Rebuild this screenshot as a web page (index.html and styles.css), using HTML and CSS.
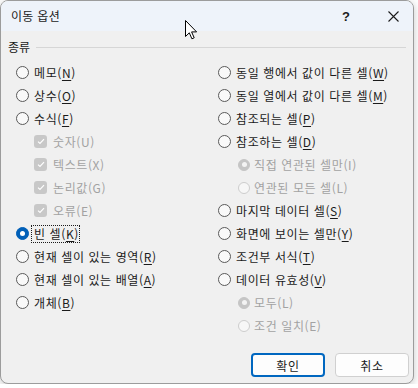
FILE: index.html
```html
<!DOCTYPE html>
<html lang="ko">
<head>
    <meta charset="UTF-8">
    <title>이동 옵션</title>
    <link rel="stylesheet" href="styles.css">
</head>
<body>
    <div class="dialog">
        <div class="titlebar">
            <span class="title">이동 옵션</span>
            <span class="help">?</span>
            <span class="close">
                <svg width="11" height="11" viewBox="0 0 11 11"><path d="M0.5 0.5 L10.5 10.5 M10.5 0.5 L0.5 10.5" stroke="#1b1b1b" stroke-width="1.1" fill="none"/></svg>
            </span>
        </div>

        <div class="content">
            <div class="group-label">
                <span>종류</span>
                <span class="rule"></span>
            </div>

            <div class="columns">
                <!-- left column -->
                <div class="col">
                    <div class="opt"><span class="radio"></span><span>메모(<u>N</u>)</span></div>
                    <div class="opt"><span class="radio"></span><span>상수(<u>O</u>)</span></div>
                    <div class="opt"><span class="radio"></span><span>수식(<u>F</u>)</span></div>
                    <div class="opt sub-check disabled"><span class="check"><svg width="8" height="7" viewBox="0 0 8 7"><path d="M1 3.6 L3 5.5 L7 1.2" stroke="#fff" stroke-width="1.2" fill="none"/></svg></span><span>숫자(U)</span></div>
                    <div class="opt sub-check disabled"><span class="check"><svg width="8" height="7" viewBox="0 0 8 7"><path d="M1 3.6 L3 5.5 L7 1.2" stroke="#fff" stroke-width="1.2" fill="none"/></svg></span><span>텍스트(X)</span></div>
                    <div class="opt sub-check disabled"><span class="check"><svg width="8" height="7" viewBox="0 0 8 7"><path d="M1 3.6 L3 5.5 L7 1.2" stroke="#fff" stroke-width="1.2" fill="none"/></svg></span><span>논리값(G)</span></div>
                    <div class="opt sub-check disabled"><span class="check"><svg width="8" height="7" viewBox="0 0 8 7"><path d="M1 3.6 L3 5.5 L7 1.2" stroke="#fff" stroke-width="1.2" fill="none"/></svg></span><span>오류(E)</span></div>
                    <div class="opt"><span class="radio on"></span><span class="focus">빈 셀(<u>K</u>)</span></div>
                    <div class="opt"><span class="radio"></span><span>현재 셀이 있는 영역(<u>R</u>)</span></div>
                    <div class="opt"><span class="radio"></span><span>현재 셀이 있는 배열(<u>A</u>)</span></div>
                    <div class="opt"><span class="radio"></span><span>개체(<u>B</u>)</span></div>
                </div>

                <!-- right column -->
                <div class="col">
                    <div class="opt"><span class="radio"></span><span>동일 행에서 값이 다른 셀(<u>W</u>)</span></div>
                    <div class="opt"><span class="radio"></span><span>동일 열에서 값이 다른 셀(<u>M</u>)</span></div>
                    <div class="opt"><span class="radio"></span><span>참조되는 셀(<u>P</u>)</span></div>
                    <div class="opt"><span class="radio"></span><span>참조하는 셀(<u>D</u>)</span></div>
                    <div class="opt sub-radio disabled"><span class="radio small dim-on"></span><span>직접 연관된 셀만(I)</span></div>
                    <div class="opt sub-radio disabled"><span class="radio small dim"></span><span>연관된 모든 셀(L)</span></div>
                    <div class="opt"><span class="radio"></span><span>마지막 데이터 셀(<u>S</u>)</span></div>
                    <div class="opt"><span class="radio"></span><span>화면에 보이는 셀만(<u>Y</u>)</span></div>
                    <div class="opt"><span class="radio"></span><span>조건부 서식(<u>T</u>)</span></div>
                    <div class="opt"><span class="radio"></span><span>데이터 유효성(<u>V</u>)</span></div>
                    <div class="opt sub-radio disabled"><span class="radio small dim-on"></span><span>모두(L)</span></div>
                    <div class="opt sub-radio disabled"><span class="radio small dim"></span><span>조건 일치(E)</span></div>
                </div>
            </div>

            <div class="buttons">
                <button class="btn primary">확인</button>
                <button class="btn">취소</button>
            </div>
        </div>

        <svg class="cursor" width="13" height="20" viewBox="0 0 13 20">
            <path d="M0.5 0.5 L0.5 16.5 L4.3 12.8 L6.9 18.8 L9.2 17.8 L6.6 11.9 L11.6 11.9 Z" fill="#fff" stroke="#000" stroke-width="1" stroke-linejoin="round"/>
        </svg>
    </div>
</body>
</html>
```

FILE: styles.css
```css
body {
    margin: 0;
    background: #ffffff;
    font-family: "Noto Sans CJK KR", "Noto Sans", sans-serif;
    font-size: 12px;
    color: #1b1b1b;
}
.dialog {
    position: relative;
    width: 414px;
    height: 384px;
    box-sizing: border-box;
    border: 1px solid #9c9c9c;
    border-radius: 8px;
    background: #f0f0f0;
    box-shadow: 0 2px 8px rgba(0,0,0,0.22);
    overflow: hidden;
}
.titlebar {
    display: flex;
    align-items: center;
    height: 30px;
    padding-left: 10px;
    background: #eef3fa;
}
.title {
    flex: 1;
    font-size: 12px;
    line-height: 16px;
    letter-spacing: 0.3px;
}
.help {
    width: 14px;
    margin-right: 35px;
    font-family: "Liberation Sans", sans-serif;
    font-size: 13px;
    font-weight: bold;
    text-align: center;
}
.close {
    display: flex;
    margin-right: 14px;
}
.content {
    padding: 8px 4px 0 7px;
}
.group-label {
    display: flex;
    align-items: center;
    gap: 6px;
    height: 16px;
    line-height: 16px;
}
.rule {
    flex: 1;
    height: 1px;
    margin-right: 3px;
    background: #d6d6d6;
}
.columns {
    display: grid;
    grid-template-columns: 202px 1fr;
    margin-top: 6px;
    padding-left: 8px;
}
.opt {
    display: flex;
    align-items: center;
    gap: 5px;
    height: 23px;
    line-height: 16px;
    letter-spacing: 0.6px;
    white-space: nowrap;
}
.opt u {
    text-underline-offset: 2px;
}
.disabled {
    color: #a2a2a2;
}
.sub-check {
    padding-left: 18px;
    gap: 6px;
}
.sub-radio {
    padding-left: 20px;
    gap: 4px;
}
.radio {
    position: relative;
    flex: none;
    width: 13px;
    height: 13px;
    box-sizing: border-box;
    border: 1px solid #5a5a5a;
    border-radius: 50%;
    background: #f9f9f9;
}
.radio.small {
    width: 12px;
    height: 12px;
}
.radio.on {
    border-color: #005fb8;
    background: #005fb8;
}
.radio.on::after,
.radio.dim-on::after {
    content: "";
    position: absolute;
    left: 50%;
    top: 50%;
    width: 5px;
    height: 5px;
    margin: -2.5px 0 0 -2.5px;
    border-radius: 50%;
    background: #ffffff;
}
.radio.dim {
    border-color: #cdcdcd;
    background: #f7f7f7;
}
.radio.dim-on {
    border-color: #c5c5c5;
    background: #c5c5c5;
}
.radio.dim-on::after {
    background: #f3f3f3;
}
.check {
    display: flex;
    align-items: center;
    justify-content: center;
    flex: none;
    width: 13px;
    height: 13px;
    border-radius: 3px;
    background: #c8c8c8;
}
.focus {
    margin-left: -3px;
    margin-right: -2px;
    padding: 0 0 0 2px;
    border: 1px dotted #1b1b1b;
    line-height: 16px;
}
.buttons {
    display: flex;
    justify-content: flex-end;
    gap: 10px;
    margin-top: 16px;
}
.btn {
    width: 74px;
    height: 24px;
    box-sizing: border-box;
    border: 1px solid #d0d0d0;
    border-radius: 4px;
    background: #fdfdfd;
    font-family: "Noto Sans CJK KR", sans-serif;
    font-size: 12px;
    letter-spacing: 0.6px;
    color: #1b1b1b;
    padding: 0;
}
.btn.primary {
    border: 2px solid #0067c0;
}
.cursor {
    position: absolute;
    left: 184px;
    top: 19px;
}
```
